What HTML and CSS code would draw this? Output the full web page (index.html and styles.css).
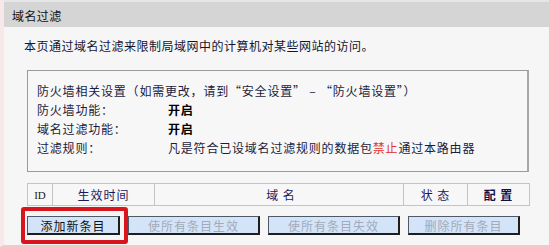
FILE: index.html
```html
<!DOCTYPE html>
<html lang="zh-CN">
<head>
<meta charset="utf-8">
<title>域名过滤</title>
<link rel="stylesheet" href="styles.css">
</head>
<body>
<div class="page">
  <div class="title">域名过滤</div>
  <div class="content">
    <p class="intro">本页通过域名过滤来限制局域网中的计算机对某些网站的访问。</p>
    <div class="box">
      <div class="row">防火墙相关设置（如需更改，请到“安全设置” – “防火墙设置”）</div>
      <div class="row"><span class="label">防火墙功能：</span><b>开启</b></div>
      <div class="row"><span class="label">域名过滤功能：</span><b>开启</b></div>
      <div class="row"><span class="label">过滤规则：</span><span>凡是符合已设域名过滤规则的数据包<span class="deny">禁止</span>通过本路由器</span></div>
    </div>
    <table class="list">
      <tr>
        <th class="c-id">ID</th>
        <th class="c-time">生效时间</th>
        <th class="c-domain">域 名</th>
        <th class="c-state">状 态</th>
        <th class="c-conf">配 置</th>
      </tr>
    </table>
    <div class="buttons">
      <span class="mark"><button class="btn w1">添加新条目</button></span>
      <button class="btn w2 off">使所有条目生效</button>
      <button class="btn w2 off">使所有条目失效</button>
      <button class="btn w3 off">删除所有条目</button>
    </div>
  </div>
</div>
</body>
</html>
```
FILE: styles.css
```css
html, body {
  margin: 0;
  padding: 0;
  background: #f6f6f6;
}
body {
  font-family: "Noto Sans CJK SC", "DejaVu Sans", sans-serif;
  font-size: 12px;
  color: #1c1c3c;
}
.page {
  width: 549px;
  height: 247px;
  box-sizing: border-box;
  border-left: 4px solid #f7e9e9;
  border-bottom: 2px solid #f2c9c9;
  overflow: hidden;
}
.title {
  height: 27px;
  line-height: 27px;
  box-sizing: border-box;
  border-top: 2px solid #e6e6e6;
  background: #d5d5d5;
  margin-left: -4px;
  padding-left: 12px;
  letter-spacing: 0.4px;
  color: #111;
}
.content {
  padding-left: 20px;
}
.intro {
  margin: 10px 0 0 0;
  line-height: 18px;
  letter-spacing: 0.5px;
  color: #141432;
}
.box {
  margin: 15px 0 0 3px;
  width: 502px;
  box-sizing: border-box;
  border: 1px solid #9a9a9a;
  border-right: 2px solid #a8a8a8;
  padding: 10px 0 14px 9px;
  background: #f7f7f7;
}
.row {
  display: flex;
  height: 19px;
  line-height: 19px;
  letter-spacing: 0.8px;
}
.label {
  width: 131px;
}
.row b {
  font-weight: 700;
  color: #000;
}
.deny {
  color: #e0302c;
}
.list {
  margin: 11px 0 0 3px;
  width: 503px;
  border-collapse: collapse;
  border: 1px solid #b4b4b4;
}
.list th {
  height: 21px;
  padding: 0;
  border: 1px solid #c4c4c4;
  font-weight: 400;
  color: #1a1a5a;
  letter-spacing: 1px;
  background: #f7f7f7;
}
.list th.c-id {
  width: 24px;
  font-family: "Liberation Serif", serif;
  font-size: 11px;
  font-weight: 400;
  letter-spacing: 0;
  color: #222;
}
.list th.c-time { width: 101px; }
.list th.c-domain { text-align: center; padding-left: 4px; }
.list th.c-state { width: 63px; }
.list th.c-conf { width: 61px; font-weight: 700; color: #10104a; }
.buttons {
  margin: 10px 0 0 3px;
  display: flex;
  gap: 8px;
}
.mark {
  position: relative;
  display: inline-flex;
}
.mark::after {
  content: "";
  position: absolute;
  left: -6px;
  right: -8px;
  top: -9px;
  bottom: -9px;
  border: 4px solid #d8141c;
  border-radius: 3px;
}
.btn {
  height: 19px;
  box-sizing: border-box;
  margin: 0;
  padding: 0;
  font-family: "Noto Sans CJK SC", sans-serif;
  font-size: 12px;
  line-height: 15px;
  letter-spacing: 1px;
  background: #d3e4f8;
  border: 1px solid #505a66;
  border-right: 2px solid #1e1e1e;
  border-bottom: 2px solid #1e1e1e;
  color: #111;
}
.w1 { width: 93px; }
.w2 { width: 132px; }
.w3 { width: 112px; }
.off { color: #a2aabb; }
```
